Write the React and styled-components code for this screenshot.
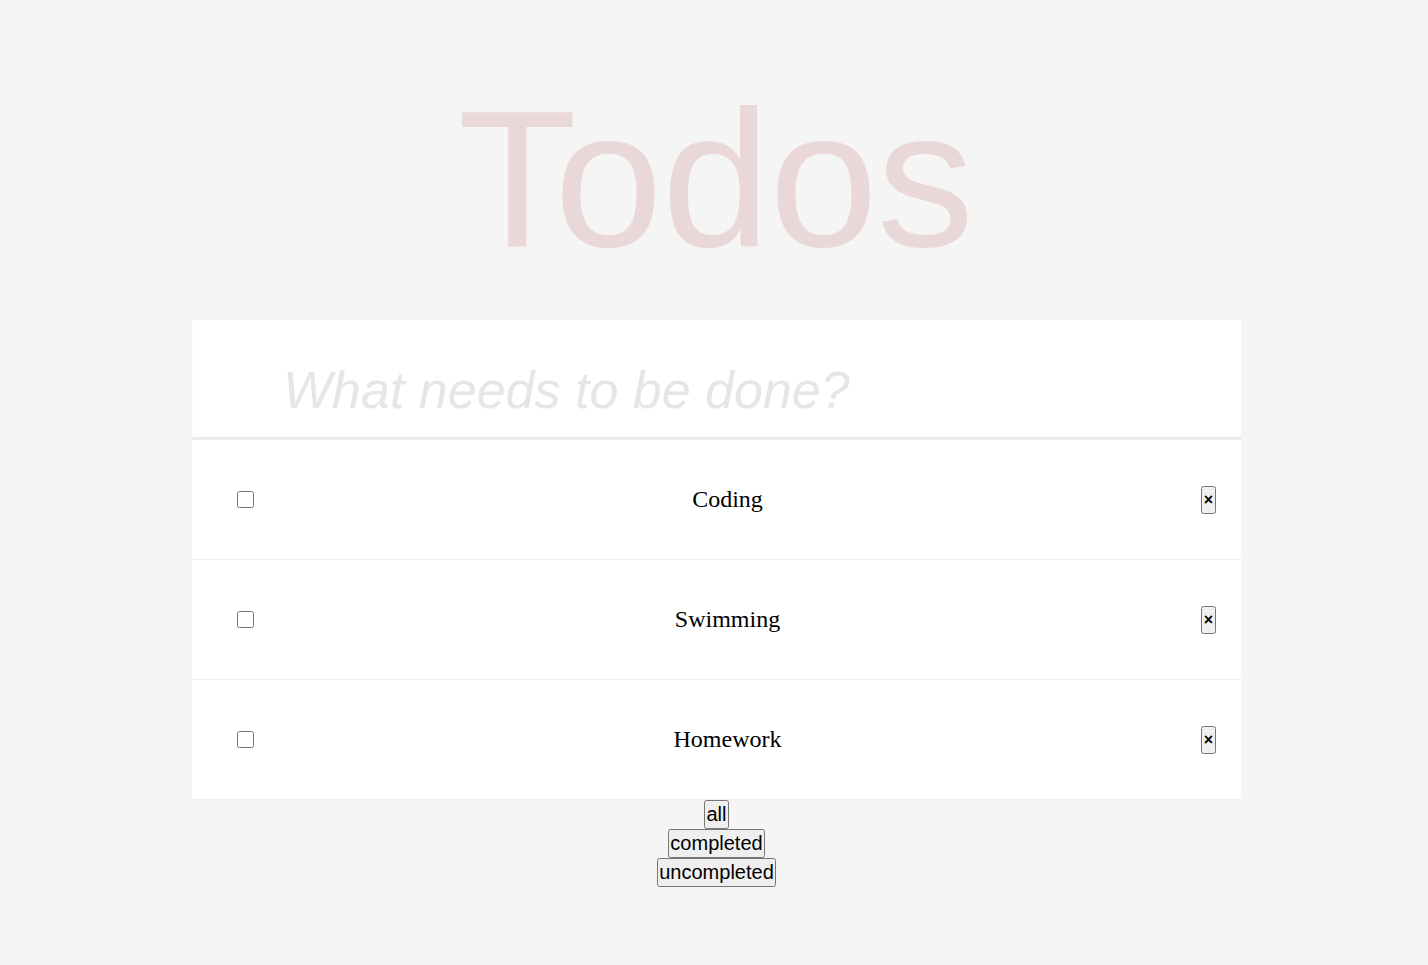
import React, { useState } from "react";
import styled, { createGlobalStyle } from "styled-components";

const GlobalStyle = createGlobalStyle`
  html, body {
    margin: 0;
    padding: 0;
    background: #f5f5f5;
  }
  body {
    font-family: "Liberation Serif", "Times New Roman", serif;
    color: #000;
  }
`;

const Page = styled.div`
  min-height: 965px;
  padding-left: 5px;
  box-sizing: border-box;
  display: flex;
  flex-direction: column;
  align-items: center;
`;

const Title = styled.h1`
  margin: 0;
  padding-top: 66px;
  font-family: "Liberation Sans", Arial, sans-serif;
  font-weight: 400;
  font-size: 195px;
  line-height: 224px;
  height: 224px;
  color: rgba(175, 47, 47, 0.15);
  text-align: center;
  letter-spacing: -1px;
  transform: translateX(-1px);
`;

const Card = styled.section`
  width: 1049px;
  margin-top: 30px;
  background: #fff;
`;

const NewTodo = styled.input`
  display: block;
  width: 100%;
  height: 120px;
  box-sizing: border-box;
  border: none;
  outline: none;
  background: #fff;
  padding: 30px 16px 10px 91px;
  font-family: "Liberation Sans", Arial, sans-serif;
  font-size: 52px;
  font-style: italic;
  color: #4d4d4d;
  box-shadow: inset 0 -3px 1px rgba(0, 0, 0, 0.08);
  &::placeholder {
    color: #e6e6e6;
    font-style: italic;
  }
`;

const List = styled.ul`
  list-style: none;
  margin: 0;
  padding: 0;
`;

const Row = styled.li`
  display: flex;
  align-items: center;
  height: 120px;
  box-sizing: border-box;
  border-bottom: 1px solid #ededed;
  padding: 0 25px 0 45px;
`;

const Check = styled.input`
  width: 17px;
  height: 17px;
  margin: 0;
  flex: none;
`;

const Label = styled.span`
  flex: 1;
  text-align: center;
  font-family: "Liberation Serif", "Times New Roman", serif;
  font-size: 24px;
  color: ${(p) => (p.$done ? "#999" : "#000")};
  text-decoration: ${(p) => (p.$done ? "line-through" : "none")};
`;

const Destroy = styled.button`
  width: 15px;
  height: 28px;
  padding: 0;
  margin: 0;
  flex: none;
  font-family: "Liberation Sans", Arial, sans-serif;
  font-size: 16px;
  font-weight: 700;
  line-height: 1;
  color: #000;
`;

const Filters = styled.div`
  display: flex;
  flex-direction: column;
  align-items: center;
`;

const FilterButton = styled.button`
  display: block;
  margin: 0;
  padding: 1px 0;
  font-family: "Liberation Sans", Arial, sans-serif;
  font-size: 20px;
  line-height: 23px;
  color: #000;
`;

const initial = [
  { id: 1, text: "Coding", done: false },
  { id: 2, text: "Swimming", done: false },
  { id: 3, text: "Homework", done: false },
];

export default function App() {
  const [todos, setTodos] = useState(initial);
  const [filter, setFilter] = useState("all");

  const visible = todos.filter((t) =>
    filter === "all" ? true : filter === "completed" ? t.done : !t.done
  );

  return (
    <>
      <GlobalStyle />
      <Page>
        <Title>Todos</Title>
        <Card>
          <NewTodo placeholder="What needs to be done?" />
          <List>
            {visible.map((t) => (
              <Row key={t.id}>
                <Check
                  type="checkbox"
                  checked={t.done}
                  onChange={() =>
                    setTodos((ts) =>
                      ts.map((x) => (x.id === t.id ? { ...x, done: !x.done } : x))
                    )
                  }
                />
                <Label $done={t.done}>{t.text}</Label>
                <Destroy
                  onClick={() => setTodos((ts) => ts.filter((x) => x.id !== t.id))}
                >
                  ×
                </Destroy>
              </Row>
            ))}
          </List>
        </Card>
        <Filters>
          {["all", "completed", "uncompleted"].map((f) => (
            <FilterButton key={f} onClick={() => setFilter(f)}>
              {f}
            </FilterButton>
          ))}
        </Filters>
      </Page>
    </>
  );
}
